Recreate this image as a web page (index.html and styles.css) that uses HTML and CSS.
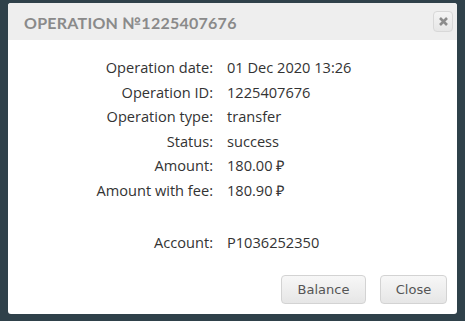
FILE: index.html
```html
<!DOCTYPE html>
<html>
<head>
<meta charset="utf-8">
<link rel="stylesheet" href="styles.css">
</head>
<body>
<div class="dialog">
  <div class="header">
    <div class="title">OPERATION №1225407676</div>
    <button class="x-btn" aria-label="close">
      <svg width="11" height="11" viewBox="0 0 11 11"><path d="M2 2 L9 9 M9 2 L2 9" stroke="#8c8c8c" stroke-width="2.6" stroke-linecap="butt"/></svg>
    </button>
  </div>
  <div class="body">
    <div class="grid">
      <div class="lbl">Operation date:</div><div class="val">01 Dec 2020 13:26</div>
      <div class="lbl">Operation ID:</div><div class="val">1225407676</div>
      <div class="lbl">Operation type:</div><div class="val">transfer</div>
      <div class="lbl">Status:</div><div class="val">success</div>
      <div class="lbl">Amount:</div><div class="val">180.00 ₽</div>
      <div class="lbl">Amount with fee:</div><div class="val">180.90 ₽</div>
      <div class="spacer"></div>
      <div class="lbl">Account:</div><div class="val">P1036252350</div>
    </div>
  </div>
  <div class="footer">
    <button class="btn">Balance</button>
    <button class="btn">Close</button>
  </div>
</div>
</body>
</html>
```
FILE: styles.css
```css
html, body { margin: 0; padding: 0; }
body {
  background: #2f414a;
  width: 465px;
  height: 321px;
  overflow: hidden;
  padding: 3px 8px 0 8px;
  box-sizing: border-box;
}
.dialog {
  width: 449px;
  height: 311px;
  background: #fff;
  border-radius: 3px;
  display: flex;
  flex-direction: column;
  overflow: hidden;
}
.header {
  height: 37px;
  background: #eeeeee;
  display: flex;
  align-items: center;
  justify-content: space-between;
  padding: 0 4px 0 16px;
  box-sizing: border-box;
}
.title {
  font-family: "Lato", sans-serif;
  font-size: 16px;
  letter-spacing: 0.25px;
  color: #8a8a8a;
  font-weight: 700;
  padding-top: 1px;
}
.x-btn {
  width: 20px;
  height: 21px;
  padding: 0;
  border: 1px solid #d8d8d8;
  border-radius: 4px;
  background: linear-gradient(#f4f4f4, #e6e6e6);
  display: flex;
  align-items: center;
  justify-content: center;
  margin-top: -1px;
}
.body {
  flex: 1;
  padding-top: 15px;
}
.grid {
  display: grid;
  grid-template-columns: 205px auto;
  column-gap: 14px;
  row-gap: 0;
  font-family: "Open Sans", sans-serif;
  font-size: 14.6px;
  line-height: 24.6px;
  color: #333;
}
.lbl { text-align: right; }
.spacer { grid-column: 1 / 3; height: 27px; }
.footer {
  display: flex;
  justify-content: flex-end;
  gap: 14px;
  padding: 0 10px 10px 0;
}
.btn {
  height: 29px;
  padding: 0 14px;
  border: 1px solid #d3d3d3;
  border-radius: 4px;
  background: linear-gradient(#f7f7f7, #e6e6e6);
  font-family: "DejaVu Sans", sans-serif;
  font-size: 13px;
  color: #555;
}
.btn:first-child { width: 85px; }
.btn:last-child { width: 67px; }
```
